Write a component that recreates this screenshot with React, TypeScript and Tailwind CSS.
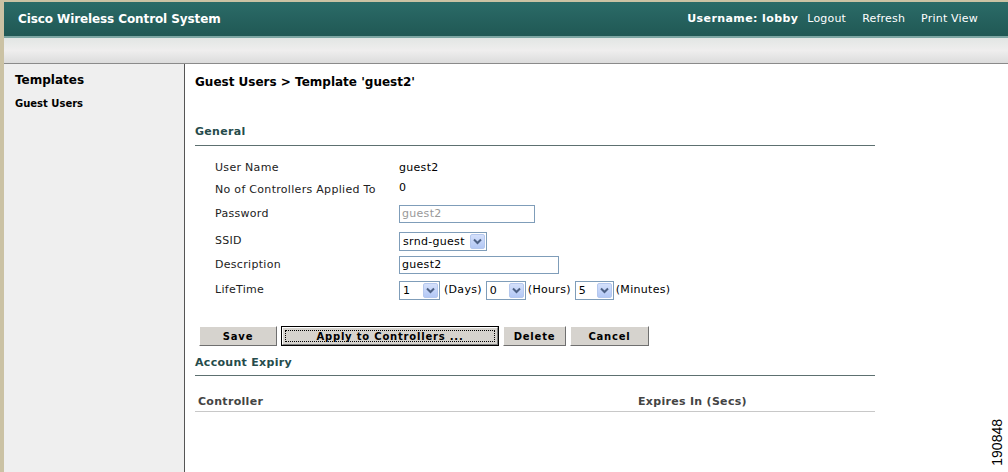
import type { ReactNode } from "react";

function Chevron() {
  return (
    <svg width="9" height="7" viewBox="0 0 9 7">
      <path d="M1 1.5 L4.5 5 L8 1.5" fill="none" stroke="#4d6185" strokeWidth="2" />
    </svg>
  );
}

function Select({ value, className }: { value: string; className: string }) {
  return (
    <div className={`flex h-[19px] items-center border border-[#7f9db9] bg-white p-[1px] ${className}`}>
      <span className="flex-1 pl-[2px] leading-none">{value}</span>
      <span className="flex h-[15px] w-[15px] items-center justify-center rounded-[2px] border border-[#b5c8ee] bg-gradient-to-b from-[#d4e0fb] to-[#b3c8f5]">
        <Chevron />
      </span>
    </div>
  );
}

function Row({ label, h, children }: { label: string; h: string; children: ReactNode }) {
  return (
    <div className={`flex items-center ${h}`}>
      <div className="w-[204px] pl-[20px] text-[#222]">{label}</div>
      <div className="flex items-center">{children}</div>
    </div>
  );
}

function Button({ label, w, focused }: { label: string; w: string; focused?: boolean }) {
  if (focused) {
    return (
      <div className={`h-[20px] border border-black ${w}`}>
        <div className="h-full border-t border-l border-white border-r-[#808080] border-b-[#808080] border-r border-b bg-[#d6d3ce] p-[2px]">
          <div className="flex h-full items-center justify-center border border-dotted border-black text-[10px] font-bold tracking-[0.8px]">
            {label}
          </div>
        </div>
      </div>
    );
  }
  return (
    <div
      className={`flex h-[20px] items-center justify-center border-t border-l border-white border-r-[#6f6f6f] border-b-[#6f6f6f] border-r border-b bg-[#d6d3ce] text-[10px] font-bold tracking-[0.8px] ${w}`}
    >
      {label}
    </div>
  );
}

export default function App() {
  return (
    <div className="relative flex h-[472px] w-[1008px] flex-col overflow-hidden border-l-[4px] border-t-[2px] border-[#cbc2a4] bg-white font-['DejaVu_Sans',sans-serif] text-[11px] tracking-[0.3px] text-black">
      <div className="flex h-[34px] items-center justify-between bg-gradient-to-b from-[#2b6b68] to-[#205854] pl-[14px] pr-[30px] text-white tracking-normal">
        <div className="text-[12px] font-bold tracking-[-0.1px]">Cisco Wireless Control System</div>
        <div className="flex items-center text-[11px] tracking-[0.2px]">
          <span className="mr-[9px] font-bold tracking-[0.4px]">Username: lobby</span>
          <span className="mr-[16px]">Logout</span>
          <span className="mr-[16px]">Refresh</span>
          <span>Print View</span>
        </div>
      </div>
      <div className="h-[2px] bg-[#7da6a3]" />
      <div className="h-[26px] border-b border-[#8a8a8a] bg-gradient-to-b from-[#e2e6e4] via-[#efeeee] to-[#dcdcdc]" />
      <div className="flex flex-1">
        <div className="w-[181px] border-r border-[#555] bg-[#efefef] pl-[11px] pt-[8px] tracking-normal">
          <div className="text-[12px] font-bold leading-[16px]">Templates</div>
          <div className="mt-[8px] text-[10px] font-bold">Guest Users</div>
        </div>
        <div className="flex-1 pl-[10px]">
          <div className="mt-[9px] h-[18px] text-[12px] font-bold leading-[18px] tracking-normal">
            Guest Users &gt; Template 'guest2'
          </div>
          <div className="w-[680px]">
            <div className="mt-[32px] h-[23px] border-b border-[#5d7070] pt-[1px] font-bold leading-[16px] text-[#254b4b]">
              General
            </div>
            <div className="pt-[11px]">
              <Row label="User Name" h="h-[22px]">
                <span>guest2</span>
              </Row>
              <Row label="No of Controllers Applied To" h="h-[22px]">
                <span className="-mt-[3px]">0</span>
              </Row>
              <Row label="Password" h="h-[26px]">
                <div className="flex h-[18px] w-[136px] items-center border border-[#7f9db9] pl-[2px] text-[#999]">
                  guest2
                </div>
              </Row>
              <Row label="SSID" h="h-[28px]">
                <Select value="srnd-guest" className="w-[88px]" />
              </Row>
              <Row label="Description" h="h-[20px]">
                <div className="flex h-[18px] w-[160px] items-center border border-[#7f9db9] pl-[2px]">
                  guest2
                </div>
              </Row>
              <Row label="LifeTime" h="h-[31px]">
                <Select value="1" className="w-[41px]" />
                <span className="ml-[4px] mr-[4px]">(Days)</span>
                <Select value="0" className="w-[40px]" />
                <span className="ml-[2px] mr-[4px]">(Hours)</span>
                <Select value="5" className="w-[39px]" />
                <span className="ml-[2px]">(Minutes)</span>
              </Row>
            </div>
            <div className="ml-[4px] mt-[20px] flex gap-[4px]">
              <Button label="Save" w="w-[78px]" />
              <Button label="Apply to Controllers ..." w="w-[218px]" focused />
              <Button label="Delete" w="w-[63px]" />
              <Button label="Cancel" w="w-[79px]" />
            </div>
            <div className="mt-[8px] h-[22px] border-b border-[#5d7070] pt-[1px] font-bold leading-[16px] text-[#254b4b]">
              Account Expiry
            </div>
            <div className="flex h-[36px] items-end border-b border-[#c8c8c8] pb-[1px] pl-[3px] font-bold text-[#444]">
              <span className="w-[440px]">Controller</span>
              <span>Expires In (Secs)</span>
            </div>
          </div>
        </div>
      </div>
      <div className="absolute bottom-[6px] right-[4px] rotate-180 font-['Liberation_Sans',sans-serif] text-[14px] leading-none tracking-normal [writing-mode:vertical-rl]">
        190848
      </div>
    </div>
  );
}
